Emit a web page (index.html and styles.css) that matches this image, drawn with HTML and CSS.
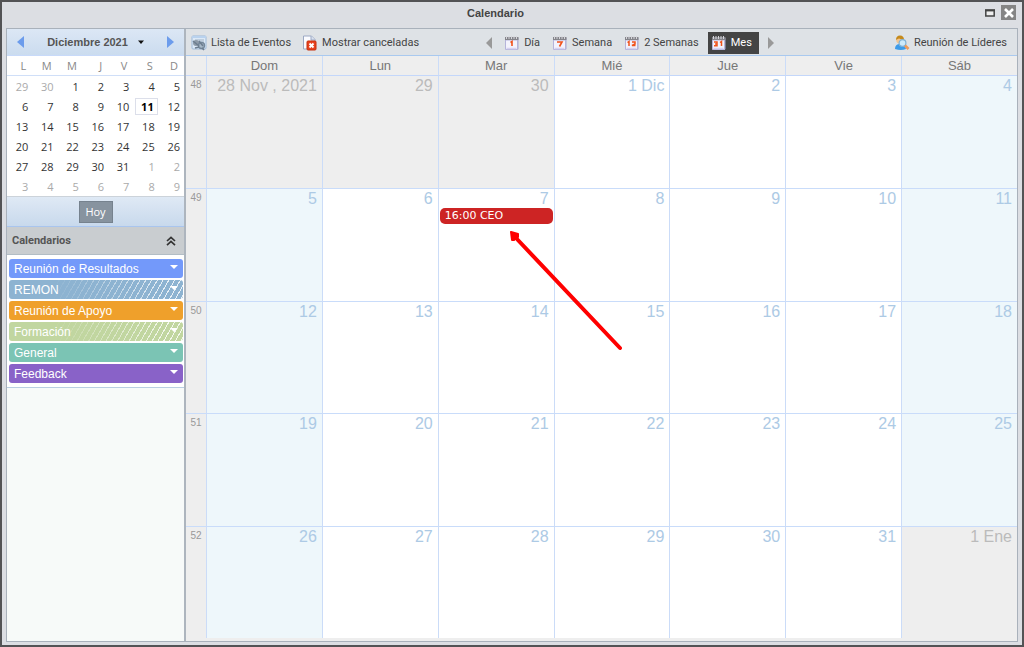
FILE: index.html
```html
<!DOCTYPE html>
<html lang="es">
<head>
<meta charset="utf-8">
<title>Calendario</title>
<link rel="stylesheet" href="styles.css">
</head>
<body>
<svg class="defs" aria-hidden="true">
  <symbol id="cal" viewBox="0 0 16 16">
    <path d="M2 3h12.500v11l-1 1H2z" fill="#aaa8cf"/>
    <path d="M1.500 5h12v9.500h-12z" fill="#f3f2fc" stroke="#b5b4da" stroke-width="1"/>
    <path d="M1 2h13.500v3H1z" fill="#85858b"/>
    <path d="M2.500 1v3M5 1v3M7.500 1v3M10 1v3M12.500 1v3" stroke="#d5d5da" stroke-width="1"/>
    <path d="M2.500 13.500h10" stroke="#d6d2f2" stroke-width="1.500"/>
  </symbol>
</svg>
<div class="window">
  <header class="titlebar">
    <h1>Calendario</h1>
    <div class="controls">
      <button class="max" aria-label="Maximizar"><svg width="10" height="8" viewBox="0 0 10 8"><path d="M.8 1.500h8.400v5.500H.8z" fill="#eee" stroke="#444" stroke-width="1.500"/><path d="M0 1.200h10" stroke="#444" stroke-width="2"/></svg></button>
      <button class="close" aria-label="Cerrar"><svg width="10" height="10" viewBox="0 0 10 10"><path d="M1 1l8 8M9 1l-8 8" stroke="#fff" stroke-width="2.600"/></svg></button>
    </div>
  </header>
  <div class="panel">
    <aside class="side">
      <div class="month">
        <button aria-label="Mes anterior"><svg width="7" height="12" viewBox="0 0 7 12"><path d="M7 0v12L0 6z" fill="#6c9cec"/></svg></button>
        <button class="month-name">Diciembre 2021 <svg width="6" height="4" viewBox="0 0 6 4"><path d="M0 .5h6L3 4z" fill="#111"/></svg></button>
        <button aria-label="Mes siguiente"><svg width="7" height="12" viewBox="0 0 7 12"><path d="M0 0v12l7-6z" fill="#6c9cec"/></svg></button>
      </div>
      <table class="mini">
        <thead><tr><th>L</th><th>M</th><th>M</th><th>J</th><th>V</th><th>S</th><th>D</th></tr></thead>
        <tbody>
          <tr><td class="out">29</td><td class="out">30</td><td>1</td><td>2</td><td>3</td><td>4</td><td>5</td></tr>
          <tr><td>6</td><td>7</td><td>8</td><td>9</td><td>10</td><td class="today"><span>11</span></td><td>12</td></tr>
          <tr><td>13</td><td>14</td><td>15</td><td>16</td><td>17</td><td>18</td><td>19</td></tr>
          <tr><td>20</td><td>21</td><td>22</td><td>23</td><td>24</td><td>25</td><td>26</td></tr>
          <tr><td>27</td><td>28</td><td>29</td><td>30</td><td>31</td><td class="out">1</td><td class="out">2</td></tr>
          <tr><td class="out">3</td><td class="out">4</td><td class="out">5</td><td class="out">6</td><td class="out">7</td><td class="out">8</td><td class="out">9</td></tr>
        </tbody>
      </table>
      <div class="now"><button>Hoy</button></div>
      <div class="section"><h2>Calendarios</h2>
        <button aria-label="Contraer"><svg width="10" height="10" viewBox="0 0 10 10"><path d="M1 5l4-3.700L9 5M1 9.200l4-3.700 4 3.700" fill="none" stroke="#333" stroke-width="1.700"/></svg></button></div>
      <div class="cals">
        <button class="c-blue">Reunión de Resultados<i></i></button>
        <button class="c-steel hatch">REMON<i></i></button>
        <button class="c-orange">Reunión de Apoyo<i></i></button>
        <button class="c-green hatch">Formación<i></i></button>
        <button class="c-teal">General<i></i></button>
        <button class="c-purple">Feedback<i></i></button>
      </div>
    </aside>
    <main class="main">
      <nav class="toolbar">
        <div class="group left">
          <button><svg width="16" height="16" viewBox="0 0 16 16"><rect x="1" y="1" width="14" height="13" rx="1" fill="#dce9f7" stroke="#9db9d8"/><path d="M1 2h14" stroke="#b9d2ee" stroke-width="2"/><path d="M4 5h9M6 7h7" stroke="#a1b2c4"/><circle cx="5" cy="8" r="3" fill="#8d9aa8"/><circle cx="10.500" cy="10.500" r="3" fill="#a9bac9" stroke="#74879a" stroke-width="1.400"/><path d="M2 6l6 5M8 6l4 5M4 13l4-1M11 13l2 2" stroke="#6d7e90" stroke-width="1.600"/></svg>Lista de Eventos</button>
          <button><svg width="16" height="16" viewBox="0 0 16 16"><path d="M1.500 1h8L13 4.500V14H1.500z" fill="#fafbff" stroke="#9ca9c4"/><path d="M9 1v4h4" fill="#dae1ef" stroke="#9ca9c4"/><rect x="5" y="6" width="9" height="9" rx="1" fill="#e7421f" stroke="#c7310f"/><path d="M7.500 8.500l4 4M11.500 8.500l-4 4" stroke="#fff" stroke-width="1.900"/></svg>Mostrar canceladas</button>
        </div>
        <div class="group views">
          <button class="step" aria-label="Anterior"><svg width="6" height="12" viewBox="0 0 6 12"><path d="M6 0v12L0 6z" fill="#999"/></svg></button>
          <button><svg width="16" height="16" viewBox="0 0 16 16"><use href="#cal"/><path d="M6.500 7.500L8 6.500V11" fill="none" stroke="#f0521b" stroke-width="1.600"/></svg>Día</button>
          <button><svg width="16" height="16" viewBox="0 0 16 16"><use href="#cal"/><path d="M5 7h5L7.500 11.500" fill="none" stroke="#f0521b" stroke-width="1.600"/></svg>Semana</button>
          <button><svg width="16" height="16" viewBox="0 0 16 16"><use href="#cal"/><path d="M3.500 7.500L5 6.500V11M8 7h3v2L8 10.500h3.500" fill="none" stroke="#f0521b" stroke-width="1.500"/></svg>2 Semanas</button>
          <button class="active"><svg width="16" height="16" viewBox="0 0 16 16"><use href="#cal"/><path d="M3 7h3v3.800H3M4 9h2M9 7.500l1.500-1V11" fill="none" stroke="#f0521b" stroke-width="1.500"/></svg>Mes</button>
          <button class="step" aria-label="Siguiente"><svg width="6" height="12" viewBox="0 0 6 12"><path d="M0 0v12l6-6z" fill="#999"/></svg></button>
        </div>
        <div class="group right">
          <button><svg width="16" height="16" viewBox="0 0 16 16"><path d="M1 14q0-5 5-5t6 5q-5 2-11 0z" fill="#3d9be9"/><circle cx="6" cy="5" r="3.800" fill="#f4c590"/><path d="M2 5q0-4.500 4-4.500T10 5Q7 4 5 3.500 3 4 2 5z" fill="#c58a1c"/><circle cx="8.500" cy="8" r="3.400" fill="#cdeafb" stroke="#7fb1d6" stroke-width="1.200"/><path d="M11 10.500l3.500 3.500" stroke="#ee9a5a" stroke-width="2.600"/></svg>Reunión de Líderes</button>
        </div>
      </nav>
      <div class="board">
      <table class="grid">
        <thead><tr><th class="wk"></th><th>Dom</th><th>Lun</th><th>Mar</th><th>Mié</th><th>Jue</th><th>Vie</th><th>Sáb</th></tr></thead>
        <tbody>
          <tr><th class="wk">48</th><td class="out">28 Nov , 2021</td><td class="out">29</td><td class="out">30</td><td>1 Dic</td><td>2</td><td>3</td><td class="rest">4</td></tr>
          <tr><th class="wk">49</th><td class="rest">5</td><td>6</td><td class="has-event"><div>7</div><button class="event">16:00 CEO</button>
            <svg class="pointer" width="114" height="121" viewBox="0 0 114 121"><path d="M7 8L111 118" stroke="#f00" stroke-width="4" stroke-linecap="round"/><path d="M2 2l7 2v3l-3 1-1 2-2 0z" fill="#f00" stroke="#f00" stroke-width="2" stroke-linejoin="round"/></svg></td><td>8</td><td>9</td><td>10</td><td class="rest">11</td></tr>
          <tr><th class="wk">50</th><td class="rest">12</td><td>13</td><td>14</td><td>15</td><td>16</td><td>17</td><td class="rest">18</td></tr>
          <tr><th class="wk">51</th><td class="rest">19</td><td>20</td><td>21</td><td>22</td><td>23</td><td>24</td><td class="rest">25</td></tr>
          <tr><th class="wk">52</th><td class="rest">26</td><td>27</td><td>28</td><td>29</td><td>30</td><td>31</td><td class="out">1 Ene</td></tr>
        </tbody>
      </table>
      </div>
    </main>
  </div>
</div>
</body>
</html>
```
FILE: styles.css
```css
* { box-sizing: border-box; }
body { margin: 0; font-family: "Open Sans", "Noto Sans", sans-serif; font-size: 11px; color: #333; }
button { margin: 0; padding: 0; border: 0; background: none; font: inherit; color: inherit; white-space: nowrap; }
h1, h2 { margin: 0; font-size: 11px; color: #444; }
table { border-spacing: 0; table-layout: fixed; width: 100%; }
th, td { padding: 0; }
.defs { position: absolute; width: 0; height: 0; }
svg { flex: none; }

.window { display: flex; flex-direction: column; height: 100vh; padding: 0 4px 3px; border: 2px solid #535355; background: #dcdee3; }
.titlebar { display: flex; align-items: center; height: 26px; flex: none; padding: 0 2px 5px 0; }
.titlebar h1 { flex: 1; text-align: center; font-family: "Liberation Sans", Arial, sans-serif; }
.controls { display: flex; align-items: center; gap: 6px; }
.controls button { display: flex; align-items: center; justify-content: center; }
.close { width: 15px; height: 15px; background: #858585; }

.panel { display: flex; flex: 1; min-height: 0; border: 1px solid #a9b1bb; }
.side { flex: none; width: 179px; background: #f7faf9; border-right: 2px solid #adb5be; }
.month { display: flex; align-items: center; justify-content: space-between; height: 27px; padding: 0 10px; background: linear-gradient(#dce7f5, #cbdcef); border-bottom: 1px solid #c8dafa; }
.month button { display: flex; align-items: center; }
.month .month-name { gap: 10px; font-family: "Liberation Sans", Arial, sans-serif; font-weight: 700; color: #555; }

.mini { background: #fff; text-align: right; border-bottom: 1px solid #ccd3da; }
.mini th { height: 20px; padding-right: 6px; font-weight: 400; color: #888; border-bottom: 1px solid #d0dff8; }
.mini td { height: 20px; padding-right: 4px; }
.mini .out { color: #aaa; }
.mini .today { padding: 0 1px 0 2px; font-weight: 700; color: #000; }
.today span { display: block; height: 17px; padding-right: 3px; line-height: 15px; border: 1px solid #dcdfea; }

.now { display: flex; justify-content: center; align-items: center; height: 30px; background: linear-gradient(#dfe9f5, #c8d9ec); border-bottom: 1px solid #a9c5ee; }
.now button { width: 34px; height: 22px; background: #87939f; border: 1px solid #76828e; color: #fff; }
.section { display: flex; justify-content: space-between; align-items: center; height: 28px; padding: 0 8px 0 5px; background: #c9cdd0; border-bottom: 1px solid #b2bdc5; }
.section h2 { font-family: Roboto, sans-serif; font-size: 11px; color: #555; }
.section button { display: flex; }
.cals { display: flex; flex-direction: column; gap: 2px; padding: 4px 1px 4px 2px; background: #fff; border-bottom: 1px solid #b9cfe3; font-family: "Liberation Sans", Arial, sans-serif; font-size: 12px; color: #fff; }
.cals button { display: flex; justify-content: space-between; height: 19px; padding: 0 5px; line-height: 20px; border-radius: 3px; }
.cals i { width: 0; height: 0; margin-top: 6px; border: 4px solid transparent; border-top-color: #fff; border-bottom: 0; }
.c-blue { background: #7399fa; }
.c-steel { background: #8db3d1; }
.c-orange { background: #efa02b; }
.c-green { background: #c1d6a0; }
.c-teal { background: #7bc4b4; }
.c-purple { background: #8962c8; }
.hatch { position: relative; z-index: 0; }
.hatch::before { content: ""; position: absolute; inset: 0; z-index: -1; background: repeating-linear-gradient(120deg, transparent 0 3px, #fff 3px 4px, transparent 4px 5px); mask-image: linear-gradient(90deg, transparent 25%, #000c 90%); }

.main { display: flex; flex-direction: column; flex: 1; min-width: 0; background: #eee; padding-bottom: 3px; }
.toolbar { display: flex; align-items: center; height: 27px; flex: none; padding: 1px 10px 0 5px; background: #dee2e6; border-bottom: 1px solid #a9c9ef; font-family: Roboto, sans-serif; color: #444; }
.group { display: flex; align-items: center; gap: 11px; }
.toolbar button { display: flex; align-items: center; gap: 4px; height: 22px; }
.toolbar .views { gap: 12px; margin-left: 67px; }
.toolbar .right { margin-left: auto; }
.toolbar .active { padding: 0 7px 0 3px; margin: 0 -3px; background: #444; color: #fff; }

.board { flex: 1; min-height: 0; }
.grid { height: 100%; font-family: "Liberation Sans", Arial, sans-serif; }
.grid thead th { height: 20px; font-size: 13px; font-weight: 400; color: #777; border-left: 1px solid #cbdcf8; border-bottom: 1px solid #c4d7fa; }
.grid tbody tr { height: 20%; }
.grid .wk { width: 20px; border-left: 0; }
.grid tbody .wk { padding-top: 3px; vertical-align: top; font-size: 10px; font-weight: 400; color: #999; }
.grid td { vertical-align: top; text-align: right; padding: 0 5px; font-size: 16px; line-height: 19px; color: #adcae5; background: #fff; border-left: 1px solid #cbdcf8; }
.grid tbody tr + tr > * { border-top: 1px solid #c9dcfa; }
.grid .rest { background: #eef7fb; }
.grid .out { background: #eee; color: #bbb; }
.grid .has-event { position: relative; padding: 0 1px; }
.has-event div { padding-right: 4px; }
.event { display: block; width: 100%; height: 16px; padding: 0 5px; border-radius: 5px; background: #cd2424; color: #fff; font: 11px/16px "DejaVu Sans", Verdana, sans-serif; text-align: left; }
.pointer { position: absolute; left: 70px; top: 41px; z-index: 2; }
```
